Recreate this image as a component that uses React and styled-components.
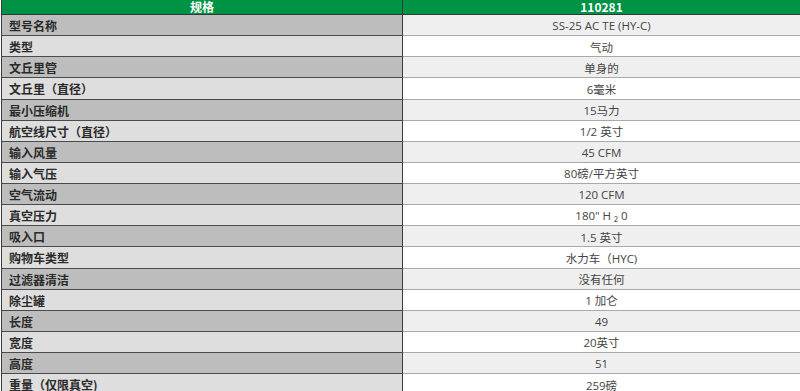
import React from 'react';
import styled, { createGlobalStyle } from 'styled-components';

const GlobalStyle = createGlobalStyle`
  body {
    margin: 0;
    background: #ffffff;
    overflow: hidden;
  }
`;

const SpecTable = styled.div`
  display: grid;
  grid-template-columns: 402px 1fr;
  margin-left: 1px;
  width: 799px;
`;

const HeadCell = styled.div`
  height: 15px;
  box-sizing: border-box;
  background: #009245;
  border-bottom: 1.5px solid #2f3a33;
  border-left: ${p => (p.$first ? '1px solid #3a3a3a' : 'none')};
  border-right: ${p => (p.$first ? '1px solid #3a3a3a' : 'none')};
  color: #ffffff;
  font-family: "Noto Sans CJK SC", "Liberation Sans", sans-serif;
  font-weight: 700;
  font-size: 12px;
  line-height: 13px;
  text-align: center;
`;

const LabelCell = styled.div`
  height: 21.13px;
  box-sizing: border-box;
  display: flex;
  align-items: center;
  padding: 1px 0 0 7px;
  background: ${p => (p.$shade ? '#bdbdbd' : '#dedede')};
  border-left: 1px solid #3a3a3a;
  border-right: 1px solid #3a3a3a;
  border-bottom: 1px solid #4a4a4a;
  color: #2a2a2a;
  font-family: "Noto Sans CJK SC", sans-serif;
  font-weight: 700;
  font-size: 12px;
  white-space: nowrap;
`;

const ValueCell = styled.div`
  height: 21.13px;
  box-sizing: border-box;
  display: flex;
  align-items: center;
  justify-content: center;
  padding-top: 1px;
  background: ${p => (p.$shade ? '#efefef' : '#ffffff')};
  border-bottom: 1px solid #a9a9a9;
  color: #444444;
  font-family: "Open Sans", "Noto Sans CJK SC", sans-serif;
  font-size: 11.5px;
  white-space: nowrap;
`;

const specs = [
  ['型号名称', 'SS-25 AC TE (HY-C)'],
  ['类型', '气动'],
  ['文丘里管', '单身的'],
  ['文丘里（直径）', '6毫米'],
  ['最小压缩机', '15马力'],
  ['航空线尺寸（直径）', '1/2 英寸'],
  ['输入风量', '45 CFM'],
  ['输入气压', '80磅/平方英寸'],
  ['空气流动', '120 CFM'],
  ['真空压力', '180" H ₂ 0'],
  ['吸入口', '1.5 英寸'],
  ['购物车类型', '水力车（HYC)'],
  ['过滤器清洁', '没有任何'],
  ['除尘罐', '1 加仑'],
  ['长度', '49'],
  ['宽度', '20英寸'],
  ['高度', '51'],
  ['重量（仅限真空)', '259磅'],
];

const App = () => (
  <>
    <GlobalStyle />
    <SpecTable>
      <HeadCell $first>规格</HeadCell>
      <HeadCell>110281</HeadCell>
      {specs.map(([label, value], i) => (
        <React.Fragment key={label}>
          <LabelCell $shade={i % 2 === 0}>{label}</LabelCell>
          <ValueCell $shade={i % 2 === 0}>{value}</ValueCell>
        </React.Fragment>
      ))}
    </SpecTable>
  </>
);

export default App;
